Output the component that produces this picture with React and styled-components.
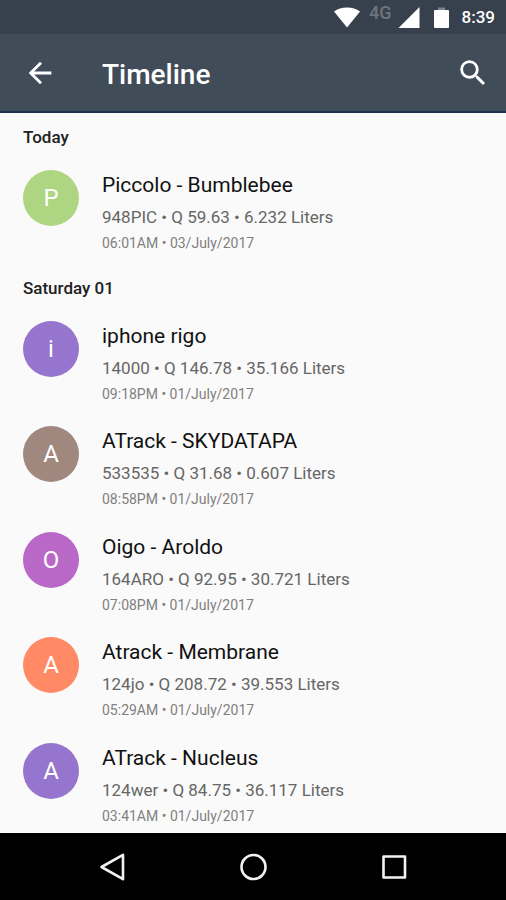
import React from 'react';
import styled, { createGlobalStyle } from 'styled-components';

const GlobalStyle = createGlobalStyle`
  * {
    box-sizing: border-box;
  }

  body {
    margin: 0;
    background-color: #fafafa;
    font-family: Roboto, 'Noto Sans', sans-serif;
  }
`;

const Screen = styled.div`
  display: flex;
  flex-direction: column;
  width: 100%;
  min-height: 100vh;
  background-color: #fafafa;
`;

const StatusBar = styled.div`
  display: flex;
  justify-content: flex-end;
  align-items: center;
  height: 34px;
  padding: 0 11px;
  background-color: #37414d;
  color: #fff;
`;

const StatusIcon = styled.svg`
  width: ${(props) => props.$width}px;
  height: 22px;
  margin-right: ${(props) => props.$gap}px;
`;

const Network = styled.span`
  align-self: flex-start;
  margin-right: 6px;
  font-size: 18px;
  line-height: 26px;
  font-weight: 500;
  color: #6d757e;
`;

const Clock = styled.time`
  font-size: 17px;
  line-height: 36px;
  font-weight: 500;
`;

const AppBar = styled.header`
  display: flex;
  align-items: center;
  height: 79px;
  padding: 0 16px 0 23px;
  background-color: #414c59;
  border-bottom: 2px solid #19314a;
  color: #fff;
`;

const IconButton = styled.button`
  display: flex;
  padding: 0;
  border: none;
  background: none;
  color: inherit;
  cursor: pointer;

  svg {
    width: 34px;
    height: 34px;
    fill: currentColor;
  }
`;

const Title = styled.h1`
  flex: 1;
  margin: 0 0 0 45px;
  padding-top: 4px;
  font-size: 28px;
  line-height: 34px;
  font-weight: 500;
`;

const Content = styled.main`
  flex: 1;
  display: flex;
  flex-direction: column;
  gap: 4px;
`;

const Section = styled.section`
  display: flex;
  flex-direction: column;

  &:last-child {
    flex: 1;
  }
`;

const SectionTitle = styled.h2`
  margin: 0;
  padding: 0 23px;
  font-size: 17px;
  line-height: 48px;
  font-weight: 500;
  color: #212121;
`;

const List = styled.ul`
  flex: 1;
  display: grid;
  grid-auto-rows: 1fr;
  gap: 6px;
  margin: 0;
  padding: 0;
  list-style: none;
`;

const Row = styled.li`
  display: flex;
  gap: 23px;
  padding: 9px 23px 7px;
`;

const Avatar = styled.div`
  flex: none;
  width: 56px;
  height: 56px;
  border-radius: 50%;
  background-color: ${(props) => props.$color};
  color: #fff;
  font-size: 24px;
  line-height: 56px;
  text-align: center;
`;

const Info = styled.div`
  min-width: 0;
`;

const Name = styled.div`
  font-size: 21px;
  line-height: 31px;
  color: #111;
`;

const Detail = styled.div`
  font-size: 17px;
  line-height: 32px;
  color: #666;
`;

const Time = styled.div`
  font-size: 14px;
  line-height: 20px;
  color: #808080;
`;

const NavBar = styled.nav`
  display: flex;
  height: 67px;
  padding: 0 42px;
  background-color: #000;
`;

const NavButton = styled.button`
  flex: 1;
  display: flex;
  justify-content: center;
  align-items: center;
  padding: 0;
  border: none;
  background: none;
  cursor: pointer;

  svg {
    width: 30px;
    height: 30px;
    fill: none;
    stroke: #f2f2f2;
    stroke-width: 2.6;
    stroke-linejoin: round;
  }
`;

const sections = [
  {
    title: 'Today',
    items: [
      { name: 'Piccolo - Bumblebee', detail: '948PIC • Q 59.63 • 6.232 Liters', time: '06:01AM • 03/July/2017', color: '#aed581' },
    ],
  },
  {
    title: 'Saturday 01',
    items: [
      { name: 'iphone rigo', detail: '14000 • Q 146.78 • 35.166 Liters', time: '09:18PM • 01/July/2017', color: '#9575cd' },
      { name: 'ATrack - SKYDATAPA', detail: '533535 • Q 31.68 • 0.607 Liters', time: '08:58PM • 01/July/2017', color: '#a1887f' },
      { name: 'Oigo - Aroldo', detail: '164ARO • Q 92.95 • 30.721 Liters', time: '07:08PM • 01/July/2017', color: '#ba68c8' },
      { name: 'Atrack - Membrane', detail: '124jo • Q 208.72 • 39.553 Liters', time: '05:29AM • 01/July/2017', color: '#ff8a65' },
      { name: 'ATrack - Nucleus', detail: '124wer • Q 84.75 • 36.117 Liters', time: '03:41AM • 01/July/2017', color: '#9575cd' },
    ],
  },
];

const App = () => {
  return (
    <>
      <GlobalStyle />
      <Screen>
        <StatusBar>
          <StatusIcon $width={26} $gap={9} viewBox="0 0 26 22" fill="#fff">
            <path d="M0 5.500C3.500 2.600 8 1.500 13 1.500s9.500 1.100 13 4L13 21.500z" />
          </StatusIcon>
          <Network>4G</Network>
          <StatusIcon $width={22} $gap={14} viewBox="0 0 22 22" fill="#fff">
            <path d="M0.500 22L21.500 1v21z" />
          </StatusIcon>
          <StatusIcon $width={15} $gap={13} viewBox="0 0 15 22">
            <path fill="#7b838c" d="M4 1.500h7V4H4z" />
            <path fill="#fff" d="M1 4h13a1 1 0 0 1 1 1v16a1 1 0 0 1-1 1H1a1 1 0 0 1-1-1V5a1 1 0 0 1 1-1z" />
          </StatusIcon>
          <Clock>8:39</Clock>
        </StatusBar>

        <AppBar>
          <IconButton type="button" aria-label="Back">
            <svg viewBox="0 0 24 24">
              <path d="M20 11H7.830l5.590-5.590L12 4l-8 8 8 8 1.410-1.410L7.830 13H20v-2z" />
            </svg>
          </IconButton>
          <Title>Timeline</Title>
          <IconButton type="button" aria-label="Search">
            <svg viewBox="0 0 24 24">
              <path d="M15.500 14h-.79l-.28-.27A6.471 6.471 0 0 0 16 9.500 6.500 6.500 0 1 0 9.500 16c1.610 0 3.090-.59 4.230-1.570l.27.28v.79l5 4.990L20.490 19l-4.990-5zm-6 0C7.010 14 5 11.990 5 9.500S7.010 5 9.500 5 14 7.010 14 9.500 11.990 14 9.500 14z" />
            </svg>
          </IconButton>
        </AppBar>

        <Content>
          {sections.map((section) => (
            <Section key={section.title}>
              <SectionTitle>{section.title}</SectionTitle>
              <List>
                {section.items.map((item) => (
                  <Row key={item.name}>
                    <Avatar $color={item.color}>{item.name[0]}</Avatar>
                    <Info>
                      <Name>{item.name}</Name>
                      <Detail>{item.detail}</Detail>
                      <Time>{item.time}</Time>
                    </Info>
                  </Row>
                ))}
              </List>
            </Section>
          ))}
        </Content>

        <NavBar>
          <NavButton type="button" aria-label="Back">
            <svg viewBox="0 0 30 30">
              <path d="M4.500 15L26 2.800v24.400z" />
            </svg>
          </NavButton>
          <NavButton type="button" aria-label="Home">
            <svg viewBox="0 0 30 30">
              <circle cx="15.500" cy="15" r="12" />
            </svg>
          </NavButton>
          <NavButton type="button" aria-label="Recent apps">
            <svg viewBox="0 0 30 30">
              <path d="M4.500 4.500h21.500v21H4.500z" />
            </svg>
          </NavButton>
        </NavBar>
      </Screen>
    </>
  );
};

export default App;
